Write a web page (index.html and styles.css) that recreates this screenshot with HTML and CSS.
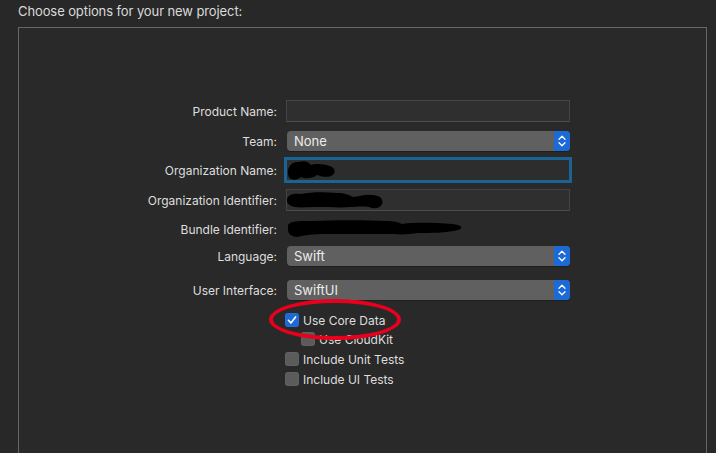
FILE: index.html
```html
<!DOCTYPE html>
<html lang="en">
<head>
<meta charset="utf-8">
<title>Choose options for your new project</title>
<link rel="stylesheet" href="styles.css">
</head>
<body>
  <div class="title">Choose options for your new project:</div>
  <div class="panel">
    <div class="form">
      <div class="row r1">
        <label class="lbl">Product Name:</label>
        <div class="field"></div>
      </div>
      <div class="row r2">
        <label class="lbl">Team:</label>
        <div class="popup"><span class="ptext">None</span>
          <span class="stepper"><svg width="16" height="20" viewBox="0 0 16 20"><path d="M5 8.2 L8 5.2 L11 8.2 M5 11.8 L8 14.8 L11 11.8" fill="none" stroke="#fff" stroke-width="1.3" stroke-linecap="round" stroke-linejoin="round"/></svg></span>
        </div>
      </div>
      <div class="row r3">
        <label class="lbl">Organization Name:</label>
        <div class="field focused">
          <svg class="scribble" width="50" height="22" viewBox="0 0 50 22"><path d="M1 14 C0 7 5 1 12 2 C17 0 22 2 24 5 C29 3 37 4 43 6 C49 8 49 14 44 16 C39 18 33 16 30 15 C25 19 18 19 14 17 C9 21 2 21 1 14 Z" fill="#000"/></svg>
        </div>
      </div>
      <div class="row r4">
        <label class="lbl">Organization Identifier:</label>
        <div class="field">
          <svg class="scribble" width="100" height="22" viewBox="0 0 100 22"><path d="M0 9 C1 4 8 3 14 4 C24 2 38 2 50 3 C58 3 62 5 66 7 C72 7 78 4 84 5 C92 5 97 8 95 14 C93 19 86 19 82 17 C76 16 68 17 62 17 C54 18 40 17 30 17 C22 17 14 18 8 17 C2 16 -1 13 0 9 Z" fill="#000"/></svg>
        </div>
      </div>
      <div class="row r5">
        <label class="lbl">Bundle Identifier:</label>
        <div class="plain">
          <svg class="scribble" width="180" height="22" viewBox="0 0 180 22"><path d="M2 7 C4 3 12 3 24 3 C50 2 80 2 100 3 C108 3 112 4 116 6 C130 4 150 5 166 6 C176 7 178 10 172 12 C160 15 144 15 132 15 C124 16 116 17 108 16 C90 16 60 16 40 16 C28 16 18 17 12 19 C6 19 2 16 2 12 Z" fill="#000"/></svg>
        </div>
      </div>
      <div class="row r6">
        <label class="lbl">Language:</label>
        <div class="popup"><span class="ptext">Swift</span>
          <span class="stepper"><svg width="16" height="20" viewBox="0 0 16 20"><path d="M5 8.2 L8 5.2 L11 8.2 M5 11.8 L8 14.8 L11 11.8" fill="none" stroke="#fff" stroke-width="1.3" stroke-linecap="round" stroke-linejoin="round"/></svg></span>
        </div>
      </div>
      <div class="row r7">
        <label class="lbl">User Interface:</label>
        <div class="popup"><span class="ptext">SwiftUI</span>
          <span class="stepper"><svg width="16" height="20" viewBox="0 0 16 20"><path d="M5 8.2 L8 5.2 L11 8.2 M5 11.8 L8 14.8 L11 11.8" fill="none" stroke="#fff" stroke-width="1.3" stroke-linecap="round" stroke-linejoin="round"/></svg></span>
        </div>
      </div>
      <div class="checks">
        <div class="check c1">
          <span class="box on"><svg width="14" height="14" viewBox="0 0 14 14"><path d="M3.4 7.3 L5.9 9.9 L10.6 3.9" fill="none" stroke="#fff" stroke-width="1.6" stroke-linecap="round" stroke-linejoin="round"/></svg></span>
          <span class="ctext">Use Core Data</span>
        </div>
        <div class="check c2 indent">
          <span class="box"></span>
          <span class="ctext">Use CloudKit</span>
        </div>
        <div class="check c3">
          <span class="box"></span>
          <span class="ctext">Include Unit Tests</span>
        </div>
        <div class="check c4">
          <span class="box"></span>
          <span class="ctext">Include UI Tests</span>
        </div>
        <div class="annot"></div>
      </div>
    </div>
  </div>
</body>
</html>
```

FILE: styles.css
```css
* { box-sizing: border-box; }
html, body { margin: 0; padding: 0; }
body {
  width: 716px;
  height: 453px;
  overflow: hidden;
  background: #282828;
  font-family: "Inter", "Liberation Sans", sans-serif;
  color: #dedede;
}
.title {
  margin-top: 3px;
  padding-left: 18px;
  height: 16px;
  line-height: 16px;
  font-size: 13px;
  letter-spacing: -0.1px;
  color: #dadada;
}
.panel {
  margin-top: 8px;
  margin-left: 18px;
  width: 689px;
  height: 440px;
  border: 1px solid #666666;
  border-bottom: none;
  background: #292929;
}
.form {
  padding-top: 72px;
}
.row {
  display: flex;
  align-items: center;
}
.lbl {
  width: 258px;
  margin-right: 9px;
  text-align: right;
  font-size: 12px;
  color: #dedede;
}
.r1 { height: 22px; }
.r2 { height: 20px; margin-top: 9px; }
.r3 { height: 22px; margin-top: 8px; }
.r4 { height: 22px; margin-top: 8px; }
.r5 { height: 22px; margin-top: 7px; }
.r6 { height: 20px; margin-top: 6px; }
.r7 { height: 20px; margin-top: 14px; }
.field {
  width: 284px;
  height: 22px;
  background: #2f2f2f;
  border: 1px solid #444444;
  border-bottom-color: #4d4d4d;
  position: relative;
}
.field.focused {
  outline: 3px solid #1b6394;
  outline-offset: -1px;
  background: #2d2d2d;
}
.plain {
  width: 284px;
  height: 22px;
  position: relative;
}
.scribble {
  position: absolute;
  left: 0;
  top: 0;
}
.popup {
  width: 283px;
  height: 20px;
  margin-left: 1px;
  background: #606060;
  border-radius: 4px;
  display: flex;
  align-items: center;
  justify-content: space-between;
  box-shadow: 0 1px 0 rgba(0,0,0,0.25);
}
.ptext {
  padding-left: 7px;
  font-size: 13px;
  color: #ececec;
}
.stepper {
  width: 16px;
  height: 20px;
  background: #1b6ad6;
  border-radius: 0 4px 4px 0;
  display: flex;
}
.checks {
  position: relative;
  margin-top: 13px;
  padding-left: 266px;
}
.check {
  display: flex;
  align-items: center;
  height: 14px;
  margin-bottom: 6px;
}
.c1 { margin-bottom: 5px; }
.indent { padding-left: 16px; }
.box {
  width: 14px;
  height: 14px;
  border-radius: 3px;
  background: #5b5b5b;
  display: flex;
  box-shadow: inset 0 0 0 0.5px rgba(255,255,255,0.08);
}
.box.on { background: #1b6ad6; }
.ctext {
  margin-left: 4px;
  font-size: 12px;
  color: #dedede;
}
.annot {
  position: absolute;
  left: 250px;
  top: -14px;
  width: 132px;
  height: 41px;
  border: 4px solid #e8001c;
  border-radius: 50%;
}
```
